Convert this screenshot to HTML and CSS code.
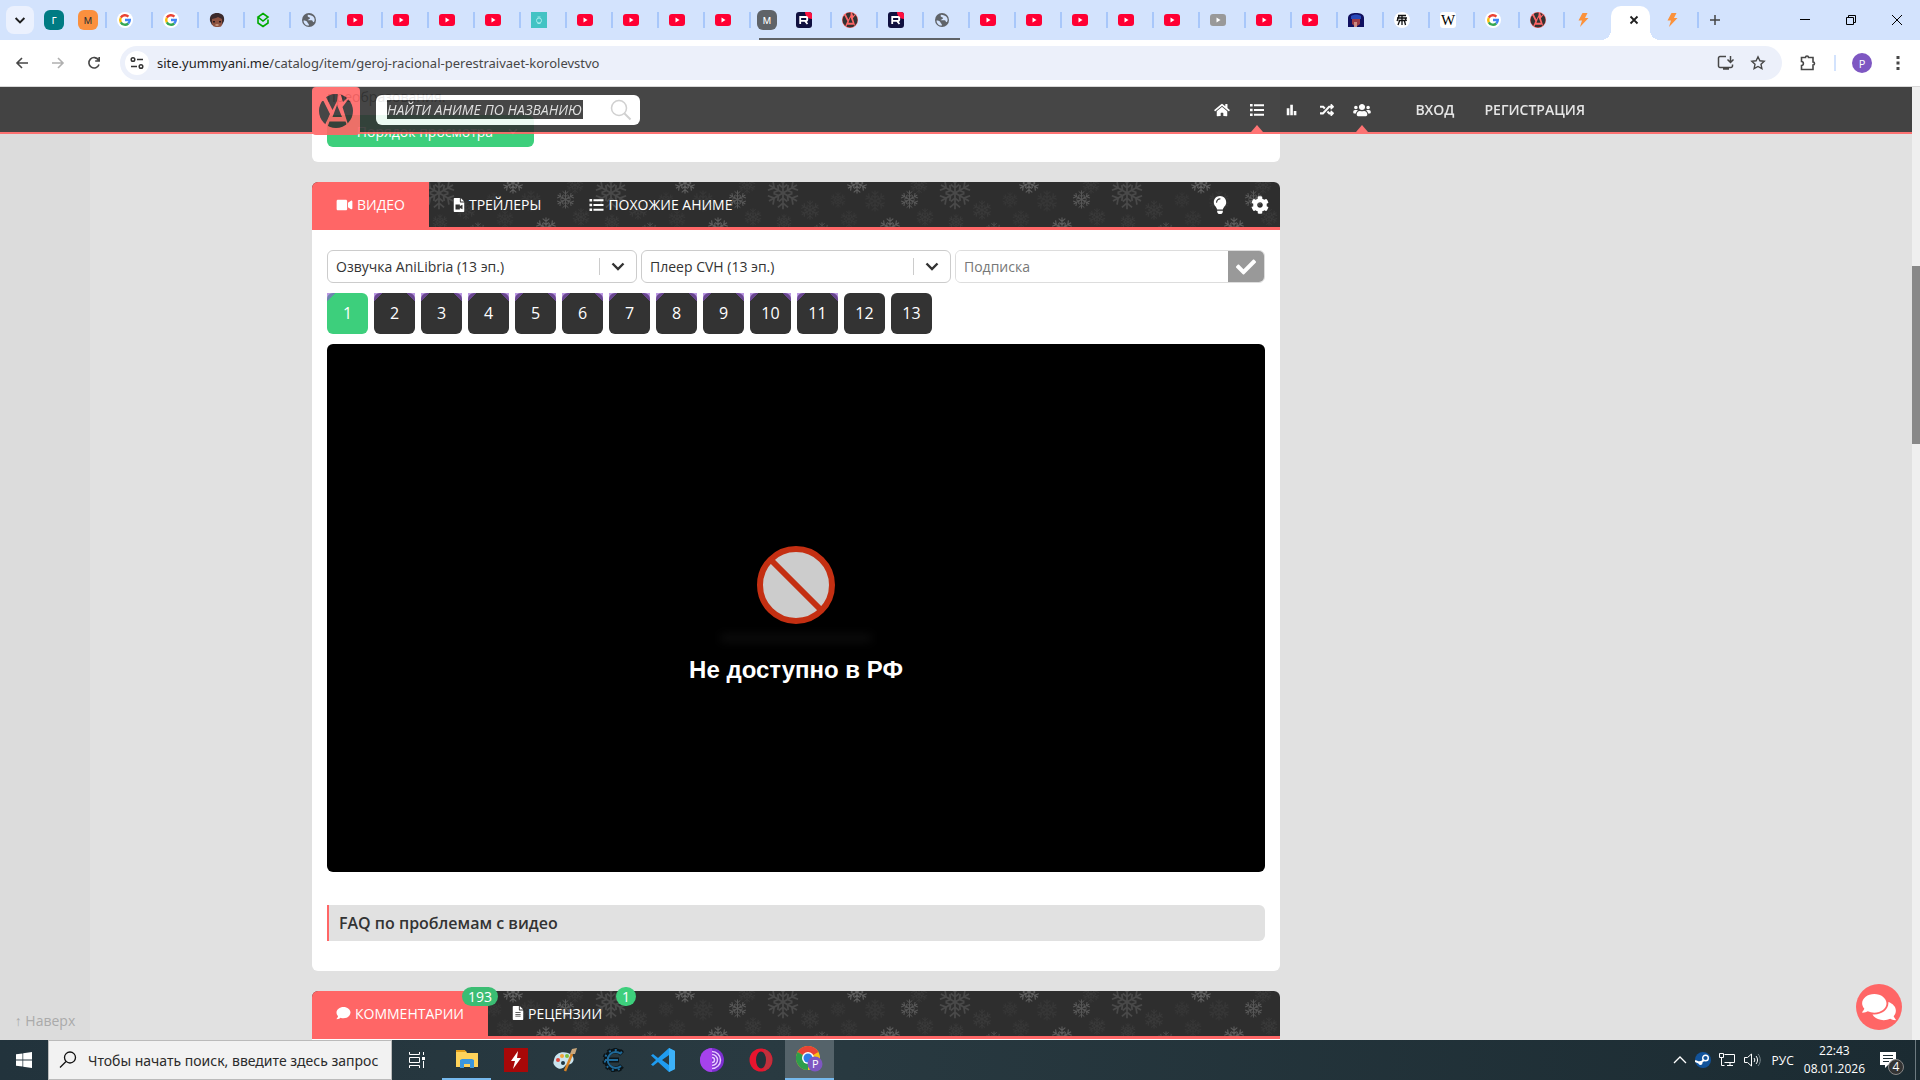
FILE: index.html
```html
<!DOCTYPE html>
<html lang="ru">
<head>
    <meta charset="UTF-8">
    <meta name="viewport" content="width=device-width, initial-scale=1.0">
    <title>YummyAnime</title>
    <link rel="stylesheet" href="styles.css">
</head>
<body>
    <!-- Icon sprite -->
    <svg class="sprite" aria-hidden="true">
        <symbol id="yt" viewBox="0 0 16 16"><rect y="2" width="16" height="12" rx="3" fill="#ff0033"/><path d="M6.5 5.5v5l4-2.5z" fill="#fff"/></symbol>
        <symbol id="yt-gray" viewBox="0 0 16 16"><rect y="2" width="16" height="12" rx="3" fill="#999"/><path d="M6.5 5.5v5l4-2.5z" fill="#fff"/></symbol>
        <symbol id="google" viewBox="0 0 16 16"><circle cx="8" cy="8" r="8" fill="#fff"/><g fill="none" stroke-width="2.4"><path d="M11.4 4.6A4.8 4.8 0 0 0 3.8 5.7" stroke="#ea4335"/><path d="M3.8 5.7a4.8 4.8 0 0 0 0 4.6" stroke="#fbbc05"/><path d="M3.8 10.3a4.8 4.8 0 0 0 7.4 1.2" stroke="#34a853"/><path d="M11.2 11.5A4.8 4.8 0 0 0 12.8 8H8" stroke="#4285f4"/></g></symbol>
        <symbol id="globe" viewBox="0 0 16 16"><circle cx="8" cy="8" r="7" fill="#5f6368"/><path d="M2.5 8.5c2 0 3.500.5 4 2s1.500 1 1.500 3C5 14 2.500 11.500 2.500 8.500zM7 2.800c-1 1.700 0 2.200 1.500 2.700S8 7.500 6.500 8c1.500 1 4.500-.5 5 1s1.500 1.500 2 0c.8-3-1.500-6-6.500-6.200z" fill="#d3e3fd"/></symbol>
        <symbol id="face" viewBox="0 0 16 16"><path d="M1 9C0 3 4 1 8 1s8 2 7 8l-2 4H3z" fill="#3b2a2c"/><path d="M3 7l4-1 2-1 4 2v5c0 3-2 3-5 3s-5-1-5-4z" fill="#8d5240"/><path d="M4 9h2v1.500H4zM10 9h2v1.500h-2z" fill="#2a1a1c"/><path d="M6.500 13h3" stroke="#f0d0b0"/></symbol>
        <symbol id="green" viewBox="0 0 16 16"><path d="M8 1.500l5 3.500-5 4-5-4zM3 5v6l5 3.500 5-3.500V7.500" fill="none" stroke="#0a0" stroke-width="1.600"/></symbol>
        <symbol id="teal" viewBox="0 0 16 16"><rect width="16" height="16" fill="#43c3c4"/><circle cx="8" cy="8.500" r="2.500" fill="none" stroke="#a5eceb"/><path d="M6.500 5h3M6.500 11.500h3" stroke="#a5eceb"/></symbol>
        <symbol id="rutube" viewBox="0 0 16 16"><rect width="16" height="16" rx="3" fill="#10103f"/><path d="M9 0h4a3 3 0 0 1 3 3v4c-4 0-7-3-7-7z" fill="#ff103f"/><path d="M4.200 12V5h6c1.500 0 1.500 3.800 0 3.800H4.500M9 9l2.500 3" fill="none" stroke="#fff" stroke-width="1.800"/></symbol>
        <clipPath id="logo-disc"><circle cx="24" cy="24" r="17"/></clipPath>
        <symbol id="yummy" viewBox="0 0 48 48"><g clip-path="url(#logo-disc)" fill="#333"><path d="M4 14h7.500L18 27l-5.500 12L4 32zM14 10l4-5h8l-1 9-4.500 9zM28 5l8 5-5 5zM36.500 12L44 18v14l-7.500 7-6-19zM25 18l5 12h-9.500zM17.500 34.500h16l3 8h-22z"/></g></symbol>
        <symbol id="yummy-tab" viewBox="6 6 36 36"><circle cx="24" cy="24" r="18" fill="#f66"/><g clip-path="url(#logo-disc)" fill="#333"><path d="M4 14h7.500L18 27l-5.500 12L4 32zM14 10l4-5h8l-1 9-4.500 9zM28 5l8 5-5 5zM36.500 12L44 18v14l-7.500 7-6-19zM25 18l5 12h-9.500zM17.500 34.500h16l3 8h-22z"/></g></symbol>
        <symbol id="girl" viewBox="0 0 16 16"><path d="M0 15V6c0-4 4-5 8-5s8 1 8 5v9z" fill="#101060"/><path d="M3 4c3-2 7-2 10 0v3H3z" fill="#2848b8"/><path d="M4 7h8v5l-4 3-4-3z" fill="#9c3b45"/><path d="M6 10h3v5H6z" fill="#cb8c84"/></symbol>
        <symbol id="kanji" viewBox="0 0 16 16"><circle cx="8" cy="8" r="8" fill="#fff"/><path d="M4 3.500h8M3 6h10M4.500 8.500h7M8 3v10M5 4l-2 5M11 6l1.500 3M5.500 9L4 13M10.500 9l1 4" fill="none" stroke="#111" stroke-width="1.300"/></symbol>
        <symbol id="bolt" viewBox="0 0 16 16"><path d="M7.500 1h5L10 6h3.500L5 15l2-6.500H3.500z" fill="#fb923c"/></symbol>
        <symbol id="home" viewBox="0 0 576 512"><path d="M280.370 148.260L96 300.110V464a16 16 0 0 0 16 16l112.060-.29a16 16 0 0 0 15.920-16V368a16 16 0 0 1 16-16h64a16 16 0 0 1 16 16v95.640a16 16 0 0 0 16 16.050L464 480a16 16 0 0 0 16-16V300L295.670 148.260a12.190 12.190 0 0 0-15.300 0zM571.600 251.470L488 182.560V44.050a12 12 0 0 0-12-12h-56a12 12 0 0 0-12 12v72.610L318.470 43a48 48 0 0 0-61 0L4.340 251.470a12 12 0 0 0-1.600 16.900l25.500 31A12 12 0 0 0 45.150 301l235.220-193.740a12.190 12.190 0 0 1 15.300 0L530.900 301a12 12 0 0 0 16.900-1.600l25.500-31a12 12 0 0 0-1.700-16.930z"/></symbol>
        <symbol id="list" viewBox="0 0 512 512"><path d="M0 40h96v88H0zM0 212h96v88H0zM0 384h96v88H0zM144 48h368v72H144zM144 220h368v72H144zM144 392h368v72H144z"/></symbol>
        <symbol id="chart" viewBox="0 0 16 16"><path d="M2 6h3v8H2zM6 2h3v12H6zM10 9h3v5h-3z"/></symbol>
        <symbol id="random" viewBox="0 0 512 512"><path d="M504.971 359.029c9.373 9.373 9.373 24.569 0 33.941l-80 79.984c-15.010 15.010-40.971 4.490-40.971-16.971V416h-58.785a12.004 12.004 0 0 1-8.773-3.812l-70.556-75.596 53.333-57.143L352 336h32v-39.981c0-21.438 25.943-31.998 40.971-16.971l80 79.981zM12 176h84l52.781 56.551 53.333-57.143-70.556-75.596A11.999 11.999 0 0 0 122.785 96H12c-6.627 0-12 5.373-12 12v56c0 6.627 5.373 12 12 12zm372 0v39.984c0 21.460 25.961 31.980 40.971 16.971l80-79.984c9.373-9.373 9.373-24.569 0-33.941l-80-79.981C409.943 24.021 384 34.582 384 56.019V96h-58.785a12.004 12.004 0 0 0-8.773 3.812L96 336H12c-6.627 0-12 5.373-12 12v56c0 6.627 5.373 12 12 12h110.785c3.326 0 6.503-1.381 8.773-3.812L352 176h32z"/></symbol>
        <symbol id="users" viewBox="0 0 640 512"><path d="M96 224c35.300 0 64-28.700 64-64s-28.700-64-64-64-64 28.700-64 64 28.700 64 64 64zm448 0c35.300 0 64-28.700 64-64s-28.700-64-64-64-64 28.700-64 64 28.700 64 64 64zm32 32h-64c-17.600 0-33.500 7.100-45.100 18.600 40.300 22.100 68.900 62 75.100 109.400h66c17.700 0 32-14.300 32-32v-32c0-35.300-28.700-64-64-64zm-256 0c61.900 0 112-50.100 112-112S381.900 32 320 32 208 82.100 208 144s50.100 112 112 112zm76.800 32h-8.300c-20.800 10-43.900 16-68.500 16s-47.600-6-68.500-16h-8.300C179.600 288 128 339.600 128 403.200V432c0 26.500 21.500 48 48 48h288c26.500 0 48-21.500 48-48v-28.800c0-63.600-51.600-115.200-115.200-115.200zm-223.700-13.400C161.500 263.100 145.600 256 128 256H64c-35.300 0-64 28.700-64 64v32c0 17.700 14.300 32 32 32h65.900c6.300-47.400 34.900-87.300 75.200-109.400z"/></symbol>
        <symbol id="video" viewBox="0 0 576 512"><path d="M336.200 64H47.800C21.400 64 0 85.400 0 111.800v288.400C0 426.600 21.400 448 47.800 448h288.400c26.400 0 47.800-21.400 47.800-47.800V111.800c0-26.400-21.400-47.800-47.800-47.800zm189.400 37.700L416 177.300v157.400l109.600 75.500c21.200 14.600 50.400-.3 50.400-25.800V127.500c0-25.400-29.100-40.400-50.400-25.800z"/></symbol>
        <symbol id="file-video" viewBox="0 0 384 512"><path fill-rule="evenodd" d="M24 0h200v136c0 13 11 24 24 24h136v328c0 13-11 24-24 24H24c-13 0-24-11-24-24V24C0 11 11 0 24 0zM256 0l128 128H256zM64 240v176h160v-50l96 46V244l-96 46v-50z"/></symbol>
        <symbol id="file-alt" viewBox="0 0 384 512"><path fill-rule="evenodd" d="M24 0h200v136c0 13 11 24 24 24h136v328c0 13-11 24-24 24H24c-13 0-24-11-24-24V24C0 11 11 0 24 0zM256 0l128 128H256zM96 224v32h192v-32zM96 288v32h192v-32zM96 352v32h192v-32z"/></symbol>
        <symbol id="bulb" viewBox="0 0 352 512"><path d="M96.060 454.350c.01 6.290 1.870 12.450 5.360 17.690l17.090 25.690a31.990 31.990 0 0 0 26.640 14.280h61.710a31.990 31.990 0 0 0 26.640-14.280l17.090-25.690a31.989 31.989 0 0 0 5.360-17.690l.04-38.350H96.010l.05 38.350zM0 176c0 44.370 16.450 84.850 43.560 115.780 16.520 18.850 42.360 58.230 52.210 91.450.04.26.07.52.11.78h160.240c.04-.26.07-.51.11-.78 9.850-33.220 35.690-72.600 52.210-91.450C335.550 260.850 352 220.370 352 176 352 78.610 272.910-.3 175.450 0 73.440.31 0 82.970 0 176zm176-80c-44.110 0-80 35.890-80 80 0 8.840-7.160 16-16 16s-16-7.160-16-16c0-61.760 50.240-112 112-112 8.840 0 16 7.160 16 16s-7.160 16-16 16z"/></symbol>
        <symbol id="cog" viewBox="0 0 512 512"><path d="M487.400 315.700l-42.600-24.600c4.300-23.200 4.300-47 0-70.200l42.600-24.600c4.900-2.800 7.100-8.600 5.500-14-11.100-35.600-30-67.800-54.700-94.600-3.800-4.100-10-5.100-14.800-2.300L380.800 110c-17.900-15.400-38.500-27.300-60.800-35.100V25.800c0-5.600-3.900-10.500-9.400-11.700-36.700-8.200-74.300-7.800-109.200 0-5.500 1.200-9.400 6.100-9.400 11.700V75c-22.200 7.900-42.800 19.800-60.800 35.100L88.700 85.500c-4.900-2.800-11-1.900-14.800 2.300-24.700 26.700-43.600 58.900-54.700 94.600-1.700 5.400.6 11.200 5.500 14L67.300 221c-4.300 23.200-4.300 47 0 70.200l-42.600 24.600c-4.900 2.800-7.100 8.600-5.500 14 11.100 35.600 30 67.800 54.700 94.600 3.800 4.100 10 5.100 14.800 2.300l42.600-24.600c17.900 15.400 38.500 27.300 60.800 35.100v49.200c0 5.600 3.900 10.500 9.400 11.700 36.700 8.200 74.300 7.800 109.200 0 5.500-1.200 9.400-6.100 9.400-11.700v-49.200c22.200-7.900 42.800-19.800 60.800-35.100l42.600 24.600c4.900 2.800 11 1.900 14.800-2.300 24.700-26.700 43.600-58.900 54.700-94.600 1.500-5.500-.7-11.300-5.600-14.100zM256 336c-44.100 0-80-35.900-80-80s35.900-80 80-80 80 35.900 80 80-35.900 80-80 80z"/></symbol>
        <symbol id="comment" viewBox="0 0 512 512"><path d="M256 32C114.600 32 0 125.100 0 240c0 49.600 21.400 95 57 130.700C44.500 421.100 2.700 466 2.200 466.500c-2.200 2.300-2.800 5.700-1.500 8.700S4.800 480 8 480c66.300 0 116-31.800 140.600-51.400 32.700 12.300 69 19.400 107.400 19.400 141.400 0 256-93.100 256-208S397.400 32 256 32z"/></symbol>
        <symbol id="comments" viewBox="0 0 576 512"><path d="M416 192c0-88.400-93.100-160-208-160S0 103.600 0 192c0 34.300 14.100 65.900 38 92-13.400 30.200-35.500 54.200-35.800 54.500-2.200 2.300-2.800 5.700-1.500 8.700S4.800 352 8 352c36.600 0 66.900-12.300 88.700-25 32.200 15.700 70.300 25 111.300 25 114.900 0 208-71.600 208-160zm122 220c23.900-26 38-57.700 38-92 0-66.900-53.500-124.200-129.300-148.100.9 6.600 1.300 13.300 1.300 20.100 0 105.900-107.700 192-240 192-10.800 0-21.300-.8-31.700-1.900C207.800 439.600 281.800 480 368 480c41 0 79.100-9.200 111.300-25 21.800 12.700 52.100 25 88.700 25 3.200 0 6.100-1.900 7.300-4.800 1.300-2.900.7-6.300-1.500-8.700-.3-.3-22.400-24.200-35.800-54.500z"/></symbol>
        <symbol id="check" viewBox="0 0 512 512"><path d="M173.898 439.404l-166.400-166.400c-9.997-9.997-9.997-26.206 0-36.204l36.203-36.204c9.997-9.998 26.207-9.998 36.204 0L192 312.690 432.095 72.596c9.997-9.997 26.207-9.997 36.204 0l36.203 36.204c9.997 9.997 9.997 26.206 0 36.204l-294.400 294.401c-9.998 9.997-26.207 9.997-36.204-.001z"/></symbol>
        <symbol id="chevron" viewBox="0 0 20 20"><path d="M4.500 7.500L10 13l5.500-5.500" fill="none" stroke="currentColor" stroke-width="2.400"/></symbol>
        <symbol id="flake" viewBox="-10 -10 20 20"><g fill="none" stroke="#fff"><path id="arm" d="M0 0V-9.500M0-3l2.500-2M0-3l-2.500-2M0-6l3-2.500M0-6l-3-2.500"/><use href="#arm" transform="rotate(60)"/><use href="#arm" transform="rotate(120)"/><use href="#arm" transform="rotate(180)"/><use href="#arm" transform="rotate(240)"/><use href="#arm" transform="rotate(300)"/></g></symbol>
        <pattern id="snow" width="172" height="60" patternUnits="userSpaceOnUse">
            <rect width="172" height="60" fill="#2e2e2e"/>
            <use href="#flake" x="110" y="-6" width="34" height="34" opacity=".13"/>
            <use href="#flake" x="72" y="8" width="19" height="19" opacity=".2"/>
            <use href="#flake" x="18" y="-10" width="22" height="22" opacity=".24"/>
            <use href="#flake" x="51" y="35" width="22" height="22" opacity=".22"/>
            <use href="#flake" x="157" y="40" width="18" height="18" opacity=".15"/>
            <use href="#flake" x="2" y="10" width="16" height="16" opacity=".04"/>
            <use href="#flake" x="36" y="8" width="22" height="22" opacity=".04"/>
            <use href="#flake" x="88" y="26" width="18" height="18" opacity=".05"/>
            <use href="#flake" x="82" y="-6" width="18" height="18" opacity=".05"/>
            <use href="#flake" x="144" y="18" width="20" height="20" opacity=".05"/>
            <use href="#flake" x="12" y="28" width="18" height="18" opacity=".04"/>
            <use href="#flake" x="120" y="32" width="16" height="16" opacity=".06"/>
        </pattern>
    </svg>

    <!-- Browser window -->
    <div class="tab-strip">
        <button class="tab-search" aria-label="Поиск вкладок"><svg width="16" height="16"><use href="#chevron"/></svg></button>
        <span class="chip chip-teal">г</span>
        <span class="chip chip-orange">м</span>
        <div class="tabs">
            <a class="tab" href="#"><svg><use href="#google"/></svg></a>
            <a class="tab" href="#"><svg><use href="#google"/></svg></a>
            <a class="tab" href="#"><svg><use href="#face"/></svg></a>
            <a class="tab" href="#"><svg><use href="#green"/></svg></a>
            <a class="tab" href="#"><svg><use href="#globe"/></svg></a>
            <a class="tab" href="#"><svg><use href="#yt"/></svg></a>
            <a class="tab" href="#"><svg><use href="#yt"/></svg></a>
            <a class="tab" href="#"><svg><use href="#yt"/></svg></a>
            <a class="tab" href="#"><svg><use href="#yt"/></svg></a>
            <a class="tab" href="#"><svg><use href="#teal"/></svg></a>
            <a class="tab" href="#"><svg><use href="#yt"/></svg></a>
            <a class="tab" href="#"><svg><use href="#yt"/></svg></a>
            <a class="tab" href="#"><svg><use href="#yt"/></svg></a>
            <a class="tab" href="#"><svg><use href="#yt"/></svg></a>
        </div>
        <div class="tab-group">
            <span class="chip chip-gray">м</span>
            <a class="tab" href="#"><svg><use href="#rutube"/></svg></a>
            <a class="tab" href="#"><svg><use href="#yummy-tab"/></svg></a>
            <a class="tab" href="#"><svg><use href="#rutube"/></svg></a>
            <a class="tab" href="#"><svg><use href="#globe"/></svg></a>
        </div>
        <div class="tabs">
            <a class="tab" href="#"><svg><use href="#yt"/></svg></a>
            <a class="tab" href="#"><svg><use href="#yt"/></svg></a>
            <a class="tab" href="#"><svg><use href="#yt"/></svg></a>
            <a class="tab" href="#"><svg><use href="#yt"/></svg></a>
            <a class="tab" href="#"><svg><use href="#yt"/></svg></a>
            <a class="tab" href="#"><svg><use href="#yt-gray"/></svg></a>
            <a class="tab" href="#"><svg><use href="#yt"/></svg></a>
            <a class="tab" href="#"><svg><use href="#yt"/></svg></a>
            <a class="tab" href="#"><svg><use href="#girl"/></svg></a>
            <a class="tab" href="#"><svg><use href="#kanji"/></svg></a>
            <a class="tab narrow" href="#"><span class="wiki">W</span></a>
            <a class="tab narrow" href="#"><svg><use href="#google"/></svg></a>
            <a class="tab narrow" href="#"><svg><use href="#yummy-tab"/></svg></a>
            <a class="tab no-line" href="#"><svg><use href="#bolt"/></svg></a>
            <div class="tab-active">
                <button aria-label="Закрыть вкладку"><svg width="10" height="10"><path d="M1.500 1.500l7 7M8.500 1.500l-7 7" stroke="#1f1f1f" stroke-width="1.800"/></svg></button>
            </div>
            <a class="tab after-active" href="#"><svg><use href="#bolt"/></svg></a>
        </div>
        <button class="new-tab" aria-label="Новая вкладка"><svg width="12" height="12"><path d="M6 1v10M1 6h10" stroke="#444" stroke-width="1.500"/></svg></button>
        <div class="window-buttons">
            <button aria-label="Свернуть"><svg width="10" height="10"><path d="M0 4.500h10" stroke="#000"/></svg></button>
            <button aria-label="Восстановить"><svg width="10" height="10"><path d="M.5 2.500h7v7h-7zM2.500 2.500v-2h7v7h-2" fill="none" stroke="#000"/></svg></button>
            <button aria-label="Закрыть"><svg width="10" height="10"><path d="M0 0l10 10M10 0L0 10" stroke="#000"/></svg></button>
        </div>
    </div>

    <div class="toolbar">
        <button class="tool" aria-label="Назад"><svg width="16" height="16"><path d="M14 8H3M8 3L3 8l5 5" fill="none" stroke="#474747" stroke-width="1.600"/></svg></button>
        <button class="tool" aria-label="Вперёд"><svg width="16" height="16"><path d="M2 8h11M8 3l5 5-5 5" fill="none" stroke="#b0b0b0" stroke-width="1.600"/></svg></button>
        <button class="tool" aria-label="Обновить"><svg width="16" height="16"><path d="M13 9.500A5.200 5.200 0 1 1 12.500 5M13.200 2v4h-4" fill="none" stroke="#474747" stroke-width="1.600"/></svg></button>
        <div class="omnibox">
            <button class="site-info" aria-label="Сведения о сайте"><svg width="14" height="14"><path d="M7 3.500h6M1 10.500h6" stroke="#333" stroke-width="1.600"/><g fill="none" stroke="#333" stroke-width="1.500"><circle cx="3" cy="3.500" r="1.800"/><circle cx="11" cy="10.500" r="1.800"/></g></svg></button>
            <span class="url">site.yummyani.me<span class="path">/catalog/item/geroj-racional-perestraivaet-korolevstvo</span></span>
            <button class="tool" aria-label="Установить"><svg width="18" height="16"><path d="M9 1.500H3A1.500 1.500 0 0 0 1.500 3v8A1.500 1.500 0 0 0 3 12.500h11a1.500 1.500 0 0 0 1.500-1.500V9.500M6 14h6M13.500 1v6M10.500 4.500l3 3 3-3" fill="none" stroke="#474747" stroke-width="1.500"/></svg></button>
            <button class="tool" aria-label="Добавить в закладки"><svg width="16" height="16"><path d="M8 1.800l1.900 4 4.300.5-3.200 3 .9 4.300L8 11.500l-3.900 2.100.9-4.300-3.200-3 4.300-.5z" fill="none" stroke="#474747" stroke-width="1.400"/></svg></button>
        </div>
        <button class="tool extensions" aria-label="Расширения"><svg width="18" height="18"><path d="M3 3.500h3.500c0-2 3-2 3 0H14V8c2 0 2 3 0 3v4.500H2.500v-4c2.500 0 2.500-4 0-4V3.500z" fill="none" stroke="#474747" stroke-width="1.600"/></svg></button>
        <span class="divider"></span>
        <button class="avatar" aria-label="Профиль">P</button>
        <button class="tool" aria-label="Меню"><svg width="4" height="14"><path d="M.5 0h3v3h-3zM.5 5.500h3v3h-3zM.5 11h3v3h-3z" fill="#474747"/></svg></button>
    </div>

    <div class="viewport">
        <div class="page">
            <header class="site-header">
                <div class="container">
                    <a class="logo" href="#" aria-label="YummyAnime"><svg width="48" height="48"><use href="#yummy"/></svg></a>
                    <label class="site-search">
                        <input type="text" aria-label="Найти аниме по названию" value="НАЙТИ АНИМЕ ПО НАЗВАНИЮ">
                        <svg width="22" height="22"><circle cx="9" cy="9" r="7.500" fill="none" stroke="#ccc" stroke-width="1.500"/><path d="M14.500 14.500l6 6" stroke="#ccc" stroke-width="2"/></svg>
                    </label>
                    <nav class="site-nav">
                        <a href="#" aria-label="Главная"><svg width="16" height="14"><use href="#home"/></svg></a>
                        <a class="has-menu" href="#" aria-label="Каталог"><svg width="16" height="14"><use href="#list"/></svg></a>
                        <a href="#" aria-label="Топ"><svg width="14" height="14"><use href="#chart"/></svg></a>
                        <a href="#" aria-label="Случайное"><svg width="16" height="14"><use href="#random"/></svg></a>
                        <a class="has-menu" href="#" aria-label="Сообщество"><svg width="18" height="14"><use href="#users"/></svg></a>
                    </nav>
                    <a class="auth-link" href="#">ВХОД</a>
                    <a class="auth-link" href="#">РЕГИСТРАЦИЯ</a>
                </div>
            </header>

            <div class="to-top"><a href="#">↑ Наверх</a></div>

            <div class="container">
                <main>
                    <section class="card intro">
                        <p>преобразования.</p>
                        <button class="order-btn">Порядок просмотра <svg width="14" height="14"><use href="#chevron"/></svg></button>
                    </section>

                    <section class="card">
                        <div class="card-tabs">
                            <svg class="snow"><rect width="100%" height="100%" fill="url(#snow)"/></svg>
                            <a class="card-tab active" href="#"><svg width="17" height="14"><use href="#video"/></svg>ВИДЕО</a>
                            <a class="card-tab" href="#"><svg width="12" height="14"><use href="#file-video"/></svg>ТРЕЙЛЕРЫ</a>
                            <a class="card-tab" href="#"><svg width="15" height="14"><use href="#list"/></svg>ПОХОЖИЕ АНИМЕ</a>
                            <div class="card-tools">
                                <button aria-label="Свет"><svg width="18" height="18"><use href="#bulb"/></svg></button>
                                <button aria-label="Настройки"><svg width="18" height="18"><use href="#cog"/></svg></button>
                            </div>
                        </div>
                        <div class="card-body">
                            <div class="selectors">
                                <div class="select">
                                    <select aria-label="Озвучка"><option>Озвучка AniLibria (13 эп.)</option></select>
                                    <svg width="20" height="20"><use href="#chevron"/></svg>
                                </div>
                                <div class="select">
                                    <select aria-label="Плеер"><option>Плеер CVH (13 эп.)</option></select>
                                    <svg width="20" height="20"><use href="#chevron"/></svg>
                                </div>
                                <form class="subscribe">
                                    <input type="text" placeholder="Подписка" aria-label="Подписка">
                                    <button type="button" aria-label="Подписаться"><svg width="20" height="20"><use href="#check"/></svg></button>
                                </form>
                            </div>
                            <div class="episodes">
                                <button class="episode current">1</button>
                                <button class="episode marked">2</button>
                                <button class="episode marked">3</button>
                                <button class="episode marked">4</button>
                                <button class="episode marked">5</button>
                                <button class="episode marked">6</button>
                                <button class="episode marked">7</button>
                                <button class="episode marked">8</button>
                                <button class="episode marked">9</button>
                                <button class="episode marked">10</button>
                                <button class="episode marked">11</button>
                                <button class="episode">12</button>
                                <button class="episode">13</button>
                            </div>
                            <div class="player">
                                <svg width="80" height="80"><circle cx="40" cy="40" r="36" fill="#ccc" stroke="#c42f12" stroke-width="6"/><path d="M15 15l50 50" stroke="#c42f12" stroke-width="6"/></svg>
                                <span class="glow"></span>
                                <p>Не доступно в РФ</p>
                            </div>
                            <h3 class="faq">FAQ по проблемам с видео</h3>
                        </div>
                    </section>

                    <section class="card">
                        <div class="card-tabs">
                            <svg class="snow"><rect width="100%" height="100%" fill="url(#snow)"/></svg>
                            <a class="card-tab active" href="#"><svg width="15" height="14"><use href="#comment"/></svg>КОММЕНТАРИИ<span class="badge">193</span></a>
                            <a class="card-tab" href="#"><svg width="12" height="14"><use href="#file-alt"/></svg>РЕЦЕНЗИИ<span class="badge">1</span></a>
                        </div>
                        <div class="card-body"></div>
                    </section>
                </main>
            </div>

            <button class="chat-btn" aria-label="Чат"><svg width="34" height="30"><use href="#comments"/></svg></button>
        </div>
        <div class="scrollbar"><div class="thumb"></div></div>
    </div>

    <!-- Windows taskbar -->
    <div class="taskbar">
        <button class="start" aria-label="Пуск"><svg width="16" height="16" fill="#fff"><path d="M0 2.300l6.500-.9v6.200H0zM7.200 1.300L16 0v7.600H7.200zM0 8.400h6.500v6.200L0 13.700zM7.200 8.400H16V16l-8.800-1.200z"/></svg></button>
        <label class="task-search">
            <svg width="18" height="18"><circle cx="11" cy="6.500" r="5.500" fill="none" stroke="#111" stroke-width="1.300"/><path d="M7 10.500L1 16.500" stroke="#111" stroke-width="1.300"/></svg>
            <input type="text" aria-label="Поиск" placeholder="Чтобы начать поиск, введите здесь запрос">
        </label>
        <button class="app" aria-label="Представление задач"><svg width="18" height="16" fill="none" stroke="#fff"><path d="M1.500 0v2.500h10V0M1.500 5.500h10v5h-10zM1.500 16v-2.500h10V16M15.500 0v3M15.500 9v7"/><path d="M14 5h3v3h-3z" fill="#fff" stroke="none"/></svg></button>
        <div class="apps">
            <button class="app running" aria-label="Проводник"><svg width="22" height="20"><path d="M0 2h10l1 2h11v14H0z" fill="#ffd35a"/><path d="M0 1h9l1 2H0z" fill="#e5a11b"/><path d="M4 19v-8l2-1h10l2 1v8h-4v-4H8v4z" fill="#3a96dd"/></svg></button>
            <button class="app" aria-label="Flash"><svg width="24" height="24"><rect width="24" height="24" fill="#a80808"/><path d="M14 3l-7 10h4l-2 8 8-11h-4z" fill="#fff"/></svg></button>
            <button class="app" aria-label="Paint"><svg width="26" height="24"><path d="M2 12C3 5 10 3 16 5s7 7 4 10-5 0-7 3-6 4-9 1-3-4-2-7z" fill="#c9e3ee"/><circle cx="6" cy="12" r="2" fill="#e0483d"/><circle cx="10" cy="8" r="2" fill="#f2a53a"/><circle cx="15" cy="8" r="2" fill="#7bbf3c"/><circle cx="11" cy="15" r="2" fill="#1e3540"/><path d="M13 23l7-17" stroke="#d98324" stroke-width="2.500"/><path d="M18 6l2-5 5-1-2 6z" fill="#c9a77c"/></svg></button>
            <button class="app" aria-label="Cheat Engine"><svg width="24" height="24" fill="none"><path d="M20 6A9 9 0 1 0 20 18M3 12h14" stroke="#0b1418" stroke-width="5"/><path d="M20 5A10 10 0 1 0 20 19" stroke="#0b1418" stroke-width="5" stroke-dasharray="3 3"/><path d="M19 6A8 8 0 1 0 19 18M3 12h13" stroke="#1f6a9a" stroke-width="2"/><path d="M20 5A10 10 0 1 0 20 19" stroke="#1f6a9a" stroke-width="2" stroke-dasharray="2 4"/></svg></button>
            <button class="app" aria-label="VS Code"><svg width="24" height="24"><path d="M18 0l6 3v18l-6 3L7 14l-5 4-2-1.500L5 12 0 7.500 2 6l5 4zM18 7l-7 5 7 5z" fill="#1f9cf0"/><path d="M18 0l6 3v18l-6 3z" fill="#3db1f8"/></svg></button>
            <button class="app" aria-label="Tor"><svg width="24" height="24" fill="none"><circle cx="12" cy="12" r="12" fill="#7c2fd0"/><path d="M12 0a12 12 0 0 0 0 24z" fill="#a642ec"/><path d="M12 3.500a8.500 8.500 0 0 1 0 17M12 6.500a5.500 5.500 0 0 1 0 11M12 9.500a2.500 2.500 0 0 1 0 5" stroke="#e8c8ff" stroke-width="1.500"/></svg></button>
            <button class="app" aria-label="Opera"><svg width="24" height="24"><circle cx="12" cy="12" r="11.500" fill="#e8142e"/><path d="M15 1a11.500 11.500 0 0 1 0 22z" fill="#c2303c"/><ellipse cx="12" cy="12" rx="5" ry="8.500" fill="#22323a"/></svg></button>
            <button class="app running current-app" aria-label="Chrome"><svg width="27" height="26"><circle cx="12" cy="12" r="12" fill="#fbc116"/><path d="M12 12L1.600 6a12 12 0 0 1 20.800 0z" fill="#ea4335"/><path d="M12 12v12A12 12 0 0 1 1.600 6z" fill="#2e9e4b"/><circle cx="12" cy="12" r="6" fill="#fff"/><circle cx="12" cy="12" r="4.500" fill="#2f7de9"/><circle cx="19" cy="18" r="7.500" fill="#7e57c2"/><text x="16" y="22" class="chrome-letter">P</text></svg></button>
        </div>
        <div class="tray">
            <svg width="14" height="8"><path d="M1 7l6-6 6 6" fill="none" stroke="#fff" stroke-width="1.300"/></svg>
            <svg width="16" height="16"><circle cx="8" cy="8" r="8" fill="#12539a"/><circle cx="10.500" cy="6" r="2.800" fill="none" stroke="#fff" stroke-width="1.400"/><path d="M0 9l5 2 4-3" fill="none" stroke="#fff" stroke-width="2"/><circle cx="5.500" cy="11" r="2" fill="#fff"/></svg>
            <svg width="17" height="14" fill="none" stroke="#fff"><path d="M5.500 1.500h10v8h-10M8 12.500h6M11 9.500v3M.5.500h4v4h-4zM2.500 4.500v8h3"/></svg>
            <svg width="17" height="14" fill="none" stroke="#fff"><path d="M.5 4.500h3l4-3.500v12l-4-3.500h-3z"/><path d="M10 5c1 1.200 1 2.800 0 4M12 3c2 2.400 2 5.600 0 8"/><path d="M14 1c3 3.600 3 8.400 0 12" stroke="#77858b"/></svg>
            <span class="lang">РУС</span>
            <time>22:43<br>08.01.2026</time>
            <button class="notices" aria-label="Уведомления"><svg width="16" height="16"><path d="M0 0h16v13H8l-3 3v-3H0z" fill="#fff"/><path d="M3 3.500h10M3 6.500h10M3 9.500h6" stroke="#1d2d34"/></svg><span>4</span></button>
        </div>
    </div>
</body>
</html>
```
FILE: styles.css
```css
* {
    box-sizing: border-box;
}
body {
    margin: 0;
    height: 100vh;
    display: flex;
    flex-direction: column;
    overflow: hidden;
    font-family: "Open Sans", "Noto Sans", sans-serif;
    font-size: 14px;
    color: #333;
}
button {
    border: 0;
    padding: 0;
    background: none;
    font: inherit;
    color: inherit;
    display: flex;
    align-items: center;
    justify-content: center;
}
input, select {
    font: inherit;
    color: inherit;
    border: 0;
    outline: 0;
    min-width: 0;
}
a {
    color: inherit;
    text-decoration: none;
}
svg {
    flex-shrink: 0;
}
svg:not([fill]) {
    fill: currentColor;
}
.sprite {
    position: absolute;
    width: 0;
    height: 0;
}

/* browser tabs */
.tab-strip {
    display: flex;
    align-items: center;
    height: 40px;
    padding-left: 6px;
    background: #d3e3fd;
    flex-shrink: 0;
}
.tab-search {
    width: 28px;
    height: 28px;
    border-radius: 8px;
    background: #ebf1fe;
    color: #1f1f1f;
}
.chip {
    width: 20px;
    height: 20px;
    margin-left: 10px;
    border-radius: 6px;
    font-size: 12px;
    line-height: 20px;
    text-align: center;
    color: #fff;
}
.chip-teal {
    background: #007b83;
}
.chip-orange {
    margin: 0 7px 0 14px;
    background: #fa903e;
    color: #333;
}
.chip-gray {
    margin: 0 9px 0 6px;
    background: #5f6368;
}
.tabs, .tab-group {
    display: flex;
    align-items: center;
    height: 40px;
}
.chip + .tabs::before {
    content: "";
    width: 2px;
    height: 16px;
    background: #a8c7fa;
}
.tab-group {
    position: relative;
}
.tab-group::after {
    content: "";
    position: absolute;
    left: 8px;
    right: 10px;
    bottom: 0;
    height: 2px;
    background: #5f6368;
}
.tab {
    width: 46px;
    height: 16px;
    padding-left: 10px;
    border-right: 2px solid #a8c7fa;
}
.tab svg {
    display: block;
    width: 16px;
    height: 16px;
}
.tab.narrow {
    width: 45px;
}
.tab.no-line {
    border-color: transparent;
}
.tab.after-active {
    width: 49px;
    padding-left: 14px;
}
.wiki {
    display: block;
    width: 16px;
    height: 16px;
    border-radius: 3px;
    background: #fff;
    color: #000;
    font: 15px/16px "Liberation Serif", serif;
    text-align: center;
}
.tab-active {
    position: relative;
    align-self: flex-end;
    width: 39px;
    height: 34px;
    padding: 0 0 6px 6px;
    border-radius: 10px 10px 0 0;
    background: #fff;
    display: flex;
    align-items: center;
    justify-content: center;
}
.tab-active::before, .tab-active::after {
    content: "";
    position: absolute;
    bottom: 0;
    left: -10px;
    width: 10px;
    height: 10px;
    background: radial-gradient(circle at 0 0, transparent 10px, #fff 10px);
}
.tab-active::after {
    left: auto;
    right: -10px;
    background: radial-gradient(circle at 100% 0, transparent 10px, #fff 10px);
}
.new-tab {
    width: 32px;
    height: 28px;
}
.window-buttons {
    display: flex;
    margin-left: auto;
}
.window-buttons button {
    width: 46px;
    height: 40px;
}

/* address bar */
.toolbar {
    display: flex;
    align-items: center;
    height: 47px;
    padding: 0 4px;
    background: #fff;
    border-bottom: 1px solid #d8d8d8;
    flex-shrink: 0;
}
.tool {
    width: 36px;
    height: 34px;
}
.omnibox {
    flex: 1;
    display: flex;
    align-items: center;
    height: 34px;
    margin-left: 8px;
    padding: 0 8px 0 5px;
    border-radius: 17px;
    background: #ecf0fa;
}
.omnibox .tool {
    width: 32px;
}
.site-info {
    width: 24px;
    height: 24px;
    border-radius: 50%;
    background: #fff;
}
.url {
    flex: 1;
    margin-left: 8px;
    font-family: "Noto Sans", sans-serif;
    font-size: 13px;
    color: #1f1f1f;
}
.path {
    color: #474747;
}
.extensions {
    margin-left: 8px;
}
.divider {
    width: 2px;
    height: 16px;
    margin: 0 16px 0 8px;
    background: #d3e3fd;
}
.avatar {
    width: 20px;
    height: 20px;
    margin-right: 8px;
    border-radius: 50%;
    background: #7e57c2;
    color: #fff;
    font-size: 11px;
}

/* page */
.viewport {
    flex: 1;
    min-height: 0;
    display: flex;
}
.page {
    flex: 1;
    position: relative;
    overflow: hidden;
    background: #e1e1e1;
}
.scrollbar {
    width: 8px;
    background: #efefef;
    padding-top: 179px;
}
.thumb {
    height: 178px;
    background: #888;
}
.container {
    max-width: 1288px;
    margin: 0 auto;
}
.site-header {
    position: absolute;
    top: 0;
    left: 0;
    right: 0;
    z-index: 2;
    height: 47px;
    background: #333;
    border-bottom: 2px solid #ff6666;
    opacity: 0.9;
    color: #fff;
}
.site-header .container {
    display: flex;
    align-items: center;
    height: 45px;
    padding-right: 15px;
}
.logo {
    align-self: flex-start;
    height: 48px;
    background: #ff6666;
    border-radius: 4px;
}
.site-search {
    display: flex;
    align-items: center;
    justify-content: space-between;
    width: 264px;
    height: 30px;
    margin-left: 16px;
    padding: 0 8px 0 11px;
    border-radius: 6px;
    background: #fff;
}
.site-search input {
    width: 196px;
    height: 19px;
    padding: 0;
    background: #333;
    color: #ddd;
    font-style: italic;
}
.site-nav {
    display: flex;
    margin: 0 36px 0 auto;
}
.site-nav a {
    position: relative;
    display: flex;
    align-items: center;
    justify-content: center;
    width: 35px;
    height: 45px;
}
.has-menu::after {
    content: "";
    position: absolute;
    bottom: 0;
    border: 6px solid transparent;
    border-top: 0;
    border-bottom: 7px solid #ff6666;
}
.auth-link {
    font-weight: 600;
    color: #e6e6e6;
}
.auth-link + .auth-link {
    margin-left: 30px;
}
.to-top {
    position: absolute;
    left: 0;
    top: 0;
    bottom: 0;
    width: 90px;
    padding-bottom: 10px;
    background: #dcdcdc;
    color: #aaa;
    display: flex;
    align-items: flex-end;
    justify-content: center;
}
main {
    display: flex;
    flex-direction: column;
    gap: 20px;
    max-width: 968px;
}
.card {
    background: #fff;
    border-radius: 6px;
}
.intro {
    padding: 0 15px 15px;
    border-radius: 0 0 6px 6px;
}
.intro p {
    margin: 0 0 8px;
    line-height: 20px;
}
.order-btn {
    width: 207px;
    height: 32px;
    gap: 13px;
    padding-left: 16px;
    border-radius: 6px;
    background: #3dcf7c;
    color: #fff;
    font-weight: 500;
}
.card-tabs {
    position: relative;
    display: flex;
    height: 48px;
    border-bottom: 3px solid #ff6666;
    color: #fff;
}
.snow {
    position: absolute;
    width: 100%;
    height: 100%;
    border-radius: 6px 6px 0 0;
}
.card-tab {
    position: relative;
    display: flex;
    align-items: center;
    gap: 4px;
    padding: 0 24px;
    font-weight: 500;
}
.card-tab.active {
    background: #ff6666;
    border-radius: 6px 0 0 0;
}
.badge {
    position: absolute;
    top: -4px;
    right: -10px;
    z-index: 1;
    min-width: 20px;
    padding: 0 6px;
    border-radius: 10px;
    background: #3dcf7c;
    line-height: 19px;
    text-align: center;
}
.active .badge {
    background: #3bbd73;
}
.card-tools {
    position: relative;
    display: flex;
    margin-left: auto;
}
.card-tools button {
    width: 40px;
}
.card-body {
    padding: 20px 15px 30px;
}
.selectors {
    display: grid;
    grid-template-columns: repeat(3, 1fr);
    gap: 4px;
}
.select {
    position: relative;
    display: flex;
    height: 33px;
}
.select select {
    width: 100%;
    padding: 0 40px 0 8px;
    border: 1px solid #ccc;
    border-radius: 6px;
    background: #fff;
    appearance: none;
}
.select svg {
    position: absolute;
    right: 9px;
    top: 6px;
    pointer-events: none;
}
.select::after {
    content: "";
    position: absolute;
    right: 37px;
    top: 8px;
    width: 1px;
    height: 17px;
    background: #ccc;
}
.subscribe {
    display: flex;
    height: 33px;
    border: 1px solid #ddd;
    border-radius: 6px;
    overflow: hidden;
}
.subscribe input {
    flex: 1;
    padding: 0 8px;
}
.subscribe input::placeholder {
    color: #777;
}
.subscribe button {
    width: 36px;
    background: #999;
    color: #fff;
}
.episodes {
    display: flex;
    flex-wrap: wrap;
    gap: 6px;
    margin: 10px 0;
}
.episode {
    position: relative;
    width: 41px;
    height: 41px;
    padding-bottom: 2px;
    border-radius: 6px;
    background: #333;
    color: #fff;
    font-size: 16px;
}
.episode.current {
    background: #3dcf7c;
}
.marked::before, .current::before {
    content: "";
    position: absolute;
    inset: 0;
    background: linear-gradient(135deg, rgba(142, 84, 207, 0.6) 6px, transparent 6px);
}
.marked::after {
    content: "";
    position: absolute;
    inset: 0;
    background: linear-gradient(225deg, rgba(142, 84, 207, 0.6) 6px, transparent 6px);
}
.player {
    aspect-ratio: 16 / 9;
    display: flex;
    flex-direction: column;
    align-items: center;
    justify-content: center;
    padding-top: 14px;
    border-radius: 6px;
    background: #000;
    color: #fff;
}
.player p {
    margin: 15px 0 0;
    font: bold 24px/28px "Liberation Sans", sans-serif;
}
.glow {
    width: 150px;
    height: 6px;
    margin-top: 10px;
    background: #111;
    filter: blur(5px);
}
.faq {
    margin: 33px 0 0;
    padding-left: 10px;
    border-left: 2px solid #ff6666;
    border-radius: 0 6px 6px 0;
    background: #e1e1e1;
    font-size: 16px;
    font-weight: 600;
    line-height: 36px;
}
.chat-btn {
    position: absolute;
    right: 10px;
    bottom: 10px;
    width: 46px;
    height: 46px;
    border-radius: 50%;
    background: #ff6666;
    color: #fff;
}

/* taskbar */
.taskbar {
    display: flex;
    height: 40px;
    flex-shrink: 0;
    background: linear-gradient(90deg, #22333c, #293a41 40%, #1b2b32);
    color: #fff;
}
.start {
    width: 48px;
}
.task-search {
    display: flex;
    align-items: center;
    width: 344px;
    padding-left: 10px;
    gap: 11px;
    border: 1px solid #bbb;
    background: #f2f2f2;
    color: #222;
}
.task-search input {
    flex: 1;
    padding: 0;
    background: none;
    font-family: "Noto Sans", sans-serif;
}
.task-search input::placeholder {
    color: #2b2b2b;
}
.apps {
    display: flex;
    margin-left: 1px;
}
.app {
    width: 49px;
}
.running {
    border-bottom: 2px solid #76b9ed;
}
.current-app {
    background: #55636a;
}
.chrome-letter {
    font-size: 11px;
    fill: #fff;
}
.tray {
    display: flex;
    align-items: center;
    gap: 8px;
    margin-left: auto;
    padding-right: 4px;
    font-size: 12px;
}
.tray time {
    margin: 0 3px 0 2px;
    line-height: 18px;
    text-align: center;
}
.lang {
    margin-left: 3px;
}
.notices {
    position: relative;
    width: 40px;
    height: 40px;
    padding-right: 16px;
    border-right: 1px solid #6d7a80;
}
.notices span {
    position: absolute;
    left: 12px;
    top: 19px;
    width: 16px;
    height: 16px;
    border: 1px solid #888;
    border-radius: 50%;
    background: #333;
    line-height: 14px;
}
```
